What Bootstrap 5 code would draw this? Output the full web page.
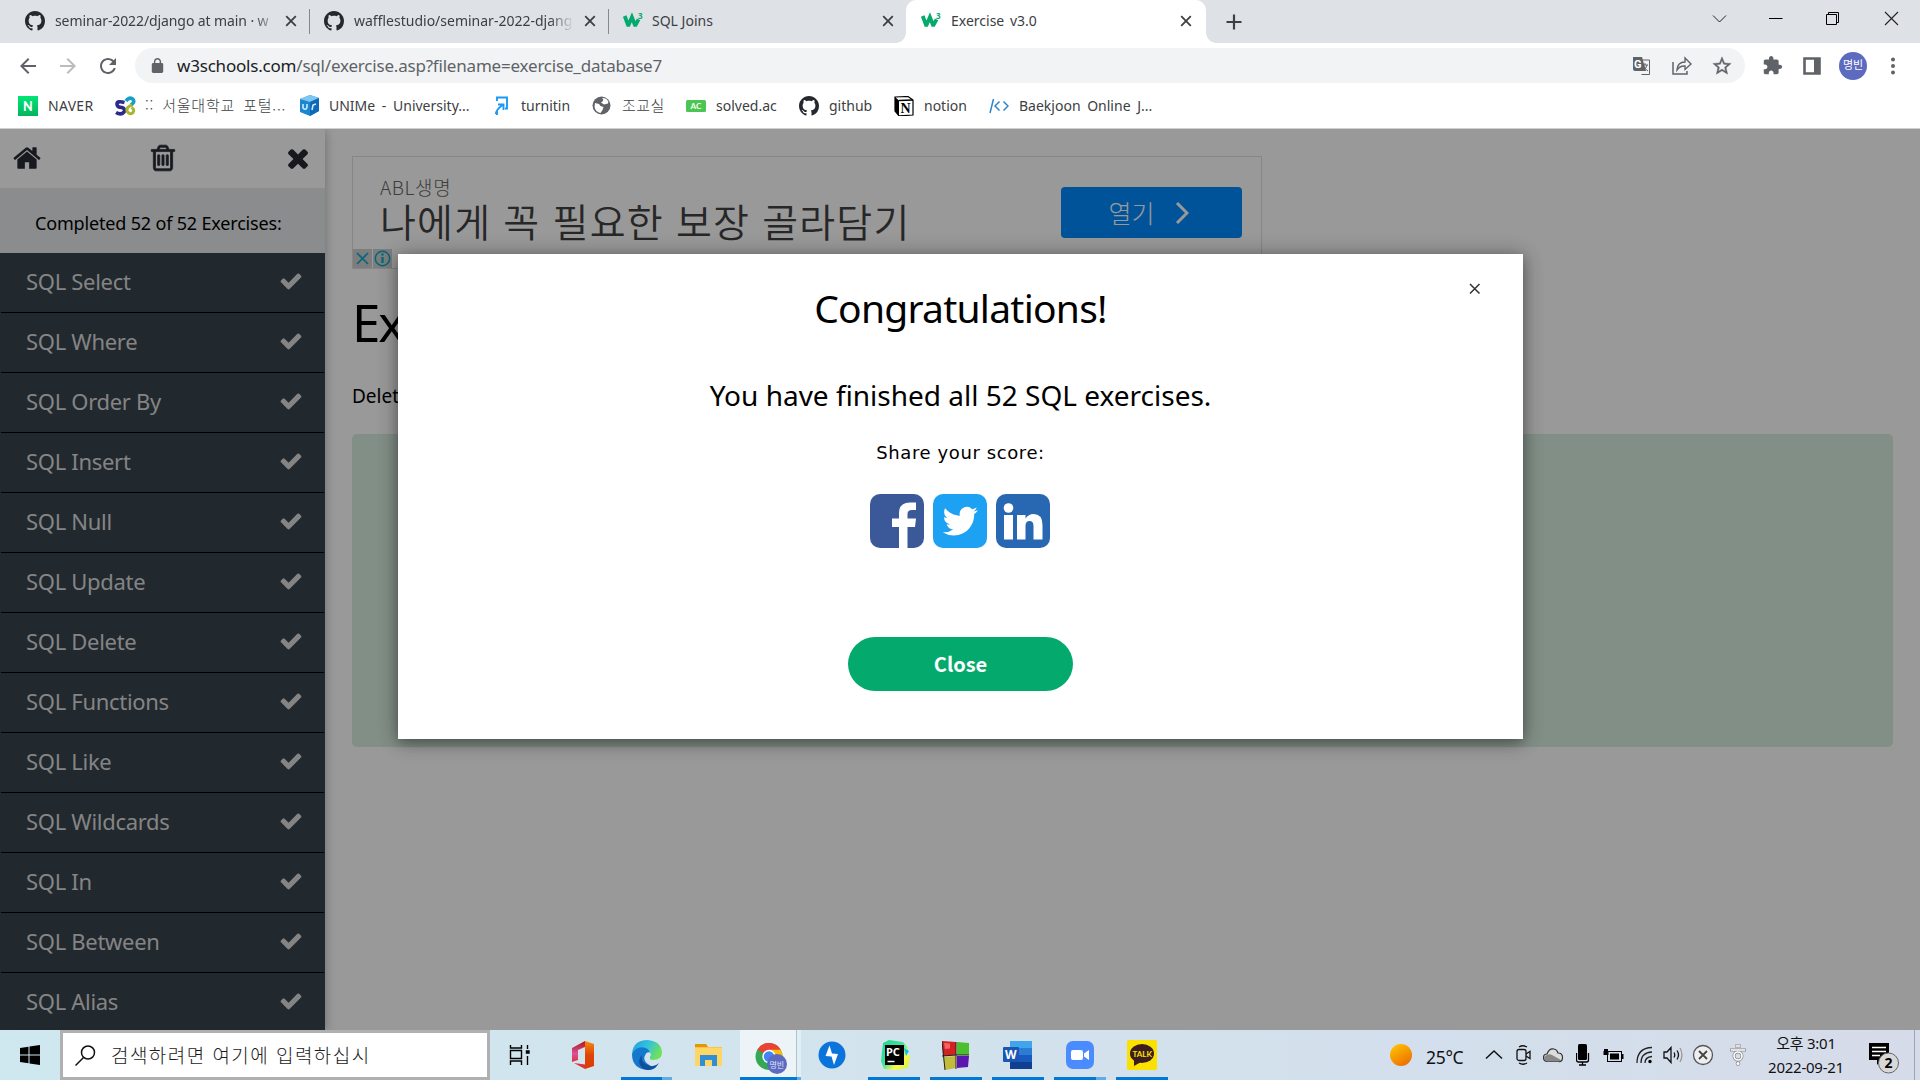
<!DOCTYPE html>
<html lang="ko">
<head>
<meta charset="utf-8">
<title>Exercise v3.0</title>
<link href="https://cdn.jsdelivr.net/npm/bootstrap@5.3.0/dist/css/bootstrap.min.css" rel="stylesheet">
<style>
:root{--ui:"Noto Sans","Noto Sans CJK KR",sans-serif}
body{width:1920px;height:1080px;overflow:hidden;font-family:var(--ui);color:#000;background:#fff}
svg{display:block;flex:none}
.nw{white-space:nowrap}
/* browser chrome */
.tabstrip{height:43px;background:#dee1e6;color:#3c4043;font-size:14px}
.tab{height:43px;padding-bottom:2px}
.tab .ttl{overflow:hidden;white-space:nowrap;line-height:22px}
.tab.sep{border-right:1px solid #85888d;height:25px;margin-top:9px;padding-bottom:1px;margin-bottom:9px}
.fade-end{-webkit-mask-image:linear-gradient(90deg,#000 88%,transparent 99%)}
.tab-on{width:300px;background:#fff;border-radius:10px 10px 0 0;position:relative}
.tab-on::before,.tab-on::after{content:"";position:absolute;bottom:0;width:10px;height:10px}
.tab-on::before{left:-10px;background:radial-gradient(circle at 0 0,transparent 9.5px,#fff 10px)}
.tab-on::after{right:-10px;background:radial-gradient(circle at 100% 0,transparent 9.5px,#fff 10px)}
.toolbar{height:45px}
.omni{height:35px;width:1610px;background:#f1f3f4;border-radius:18px;margin-left:15px}
.url{font-size:17px;letter-spacing:-.2px;color:#5f6368;margin-left:12px;line-height:24px}
.url b{font-weight:400;color:#202124}
.avatar{width:28px;height:28px;background:#5c6bc0;color:#fff;font-size:11px;margin-left:17px}
.bm{height:41px;padding-left:18px;font-size:14px;color:#3c4043;border-bottom:1px solid #d0d0d0;padding-bottom:5px;word-spacing:3px}
.bm>div{display:flex;align-items:center;white-space:nowrap}
.bm .ic{width:30px;flex:none}
.bm .ko{font-family:"Noto Sans CJK KR",sans-serif;font-weight:300;font-size:15px;letter-spacing:.8px}
/* page */
.page{height:901px;position:relative;overflow:hidden}
.side{width:325px;box-shadow:0 2px 10px rgba(0,0,0,.3);position:relative;z-index:1}
.side-head{height:59px;padding:14px 12px 0;color:#282a35}
.side-prog{height:65px;background:#e7e9eb;font-size:18px;line-height:71px;padding-left:35px;letter-spacing:-.17px}
.ex{height:60px;background:#38434d;color:#ddd;font-size:22px;padding:0 22px 4px 26px;letter-spacing:-.3px;position:relative}
.ex+.ex::before{content:"";position:absolute;left:1px;right:1px;top:-1px;height:1px;background:#000}
.main{padding:27px 27px 0 27px}
.adbox{width:910px;height:113px;border:1px solid #e0e0e0;position:relative}
.ad-brand{font:300 19px/24px "Noto Sans CJK KR",sans-serif;letter-spacing:.6px;color:#666}
.ad-line{font:350 39px/42px "Noto Sans CJK KR",sans-serif;letter-spacing:1.2px;color:#424242}
.ad-btn{width:181px;height:51px;border-radius:4px;background:#008aff;color:#fff;font-size:25px;font-family:"Noto Sans CJK KR",sans-serif;font-weight:300}
.ad-mark{position:absolute;left:0;bottom:0}
.h-ex{font-size:51px;line-height:60px;font-weight:400;letter-spacing:-2px}
.answer{height:313px;background:#d9eee1;border-radius:5px}
.shade{position:absolute;inset:0;background:rgba(0,0,0,.4);z-index:2}
.dlg{position:absolute;left:398px;top:125px;width:1125px;height:485px;background:#fff;z-index:3;box-shadow:0 4px 10px rgba(0,0,0,.2),0 4px 20px rgba(0,0,0,.19),0 0 20px rgba(0,0,0,.2)}
.dlg-x{position:absolute;right:42px;top:29px}
.dlg h2{font-size:39px;line-height:56px;font-weight:400;letter-spacing:-.75px}
.dlg h3{font-size:28px;line-height:40px;font-weight:400}
.share{font-family:"DejaVu Sans",sans-serif;font-size:18px;line-height:24px;letter-spacing:.6px}
.btn-done{width:225px;height:54px;background:#04aa6d;color:#fff;font:700 20px/50px "Noto Sans CJK KR",sans-serif;padding:0;border:0}
/* taskbar */
.task{height:50px;background:linear-gradient(90deg,#cfe7ef 0,#d2e4ee 40%,#d3dfec 75%,#d6dbe9 100%)}
.start{width:60px;padding-left:20px}
.find{width:430px;height:50px;border:3px solid #b0b0b0;background:#fff;font-size:19px;letter-spacing:1.45px;padding-left:12px;color:#1a1a1a;font-family:"Noto Sans CJK KR",sans-serif;font-weight:300}
.app{height:50px;width:62px;display:flex;align-items:center;justify-content:center;position:relative;flex:none}
.app.run::after{content:"";position:absolute;left:5px;right:5px;bottom:0;height:3px;background:#0078d7}
.app.multi::after{background:linear-gradient(90deg,#0078d7 81%,#64abe3 81%)}
.app.cur{background:linear-gradient(90deg,#edf4f8 56px,#a9c5d2 56px 57px,#e3eef4 57px)}
.app.cur::after{left:0;right:0;background:linear-gradient(90deg,#0078d7 57px,#64abe3 57px)}
.tray{color:#111}
.tray .tm{font-size:15px;line-height:24px;width:84px;text-align:center;letter-spacing:-.25px}
</style>
</head>
<body>
<svg width="0" height="0" style="position:absolute">
<defs>
<symbol id="gh" viewBox="0 0 16 16"><path fill="#24292f" d="M8 0C3.58 0 0 3.58 0 8c0 3.54 2.29 6.53 5.47 7.59.4.07.55-.17.55-.38 0-.19-.01-.82-.01-1.49-2.01.37-2.53-.49-2.69-.94-.09-.23-.48-.94-.82-1.13-.28-.15-.68-.52-.01-.53.63-.01 1.08.58 1.23.82.72 1.21 1.87.87 2.33.66.07-.52.28-.87.51-1.07-1.78-.2-3.64-.89-3.64-3.95 0-.87.31-1.59.82-2.15-.08-.2-.36-1.02.08-2.12 0 0 .67-.21 2.2.82.64-.18 1.32-.27 2-.27.68 0 1.36.09 2 .27 1.53-1.04 2.2-.82 2.2-.82.44 1.1.16 1.92.08 2.12.51.56.82 1.27.82 2.15 0 3.07-1.87 3.75-3.65 3.95.29.25.54.73.54 1.48 0 1.07-.01 1.93-.01 2.2 0 .21.15.46.55.38A8.013 8.013 0 0016 8c0-4.42-3.58-8-8-8z"/></symbol>
<symbol id="cx" viewBox="0 0 12 12"><path d="M1.2 1.2l9.600 9.600M10.800 1.200L1.200 10.800" stroke="#3c4043" stroke-width="1.800" fill="none"/></symbol>
<symbol id="w3" viewBox="0 0 20 20"><path d="M1.700 5l3.300 8.800h.6l3.300-7.600 3 7.600h.7l3-5.500" fill="none" stroke="#04aa6d" stroke-width="3.800"/><text x="15" y="8" font-size="8" font-weight="700" fill="#04aa6d" font-family="Noto Sans">3</text></symbol>
<symbol id="ck" viewBox="0 0 1792 1792"><path fill="currentColor" d="M1671 566q0 40-28 68l-724 724-136 136q-28 28-68 28t-68-28l-136-136-362-362q-28-28-28-68t28-68l136-136q28-28 68-28t68 28l294 295 656-657q28-28 68-28t68 28l136 136q28 28 28 68z"/></symbol>
<linearGradient id="gEdge" x1="0" y1="0" x2="1" y2=".4"><stop offset="0" stop-color="#1e9de0"/><stop offset=".55" stop-color="#33c3dd"/><stop offset="1" stop-color="#6fe05c"/></linearGradient>
<linearGradient id="gOff" x1="0" y1="0" x2="0" y2="1"><stop offset="0" stop-color="#b5121b"/><stop offset=".6" stop-color="#d9539a"/><stop offset="1" stop-color="#e0303a"/></linearGradient>
<linearGradient id="gOff2" x1="0" y1="0" x2="0" y2="1"><stop offset="0" stop-color="#f58a0c"/><stop offset=".5" stop-color="#e04406"/><stop offset="1" stop-color="#d93a05"/></linearGradient>
<linearGradient id="gSun" x1=".2" y1="0" x2=".8" y2="1"><stop offset="0" stop-color="#ffc400"/><stop offset="1" stop-color="#ec6a00"/></linearGradient>
<linearGradient id="gN" x1="0" y1="0" x2="0" y2="1"><stop offset="0" stop-color="#00e676"/><stop offset="1" stop-color="#04b45f"/></linearGradient>
<linearGradient id="gPc" x1="0" y1="0" x2="1" y2="1"><stop offset="0" stop-color="#21d789"/><stop offset=".45" stop-color="#3fe3a0"/><stop offset=".7" stop-color="#fcf84a"/><stop offset="1" stop-color="#c8f04a"/></linearGradient>
</defs></svg>

<header>
<div class="tabstrip d-flex">
  <div class="tab sep d-flex align-items-center" style="width:310px"><svg style="margin-left:25px" width="20" height="20"><use href="#gh"/></svg><div class="ttl fade-end" style="width:226px;margin-left:10px;letter-spacing:-.1px">seminar-2022/django at main · w</div><svg class="ms-1" width="12" height="12"><use href="#cx"/></svg></div>
  <div class="tab sep d-flex align-items-center" style="width:299px"><svg style="margin-left:14px" width="20" height="20"><use href="#gh"/></svg><div class="ttl fade-end" style="width:222px;margin-left:10px">wafflestudio/seminar-2022-django</div><svg style="margin-left:8px" width="12" height="12"><use href="#cx"/></svg></div>
  <div class="tab d-flex align-items-center" style="width:297px"><svg style="margin-left:13px" width="22" height="20"><use href="#w3"/></svg><div class="ttl ms-2" style="width:221px">SQL Joins</div><svg style="margin-left:9px" width="12" height="12"><use href="#cx"/></svg></div>
  <div class="tab tab-on d-flex align-items-center"><svg style="margin-left:14px" width="22" height="20"><use href="#w3"/></svg><div class="ttl" style="width:221px;margin-left:9px;word-spacing:2px">Exercise v3.0</div><svg style="margin-left:8px" width="12" height="12"><use href="#cx"/></svg></div>
  <svg style="margin:14px 0 0 20px" width="16" height="16"><path d="M8 .5v15M.5 8h15" stroke="#3c4043" stroke-width="2.200"/></svg>
  <div class="ms-auto d-flex" style="padding:11px 21px 0 0">
    <svg width="15" height="15"><path d="M1 4.500l6.500 6.500L14 4.500" fill="none" stroke="#222"/></svg>
    <svg style="margin-left:42px" width="14" height="15"><path d="M0 7.500h13.500" stroke="#000"/></svg>
    <svg style="margin-left:43px" width="14" height="15"><path d="M.5 3.500h10v10h-10zM2.500 3V1.500h10v10H11" fill="none" stroke="#000"/></svg>
    <svg style="margin-left:44px" width="15" height="15"><path d="M1 1l13 13M14 1L1 14" stroke="#222" stroke-width="1.100"/></svg>
  </div>
</div>
<div class="toolbar d-flex align-items-center">
  <svg style="margin-left:16px" width="24" height="24" viewBox="0 0 24 24"><path fill="#5f6368" d="M20 11H7.830l5.590-5.590L12 4l-8 8 8 8 1.410-1.410L7.830 13H20v-2z"/></svg>
  <svg style="margin-left:16px" width="24" height="24" viewBox="0 0 24 24"><path fill="#babcbe" d="M4 11h12.170l-5.590-5.590L12 4l8 8-8 8-1.410-1.410L16.170 13H4z"/></svg>
  <svg style="margin-left:16px" width="24" height="24" viewBox="0 0 24 24"><path fill="#5f6368" d="M17.650 6.350C16.200 4.900 14.210 4 12 4c-4.420 0-7.990 3.580-7.990 8s3.570 8 7.990 8c3.730 0 6.840-2.550 7.730-6h-2.080c-.82 2.330-3.040 4-5.650 4-3.310 0-6-2.690-6-6s2.690-6 6-6c1.660 0 3.140.69 4.220 1.780L13 11h7V4l-2.350 2.350z"/></svg>
  <div class="omni d-flex align-items-center">
    <svg style="margin-left:15px" width="15" height="15" viewBox="3 1 18 21"><path fill="#5f6368" d="M18 8h-1V6c0-2.760-2.240-5-5-5S7 3.240 7 6v2H6c-1.100 0-2 .9-2 2v10c0 1.100.9 2 2 2h12c1.100 0 2-.9 2-2V10c0-1.100-.9-2-2-2zM9 6c0-1.660 1.340-3 3-3s3 1.340 3 3v2H9V6z"/></svg>
    <div class="url nw"><b>w3schools.com</b>/sql/exercise.asp?filename=exercise_database7</div>
    <div class="ms-auto d-flex align-items-center" style="padding-right:12px">
      <svg width="20" height="20"><path d="M8 4h9.500v14.500H9.500" fill="#f1f3f4" stroke="#5f6368"/><path d="M1 1h9l4 14H3a2 2 0 0 1-2-2z" fill="#5f6368"/><text x="2" y="12" font-size="11" font-weight="700" fill="#fff" font-family="Roboto">G</text><path d="M10 9h6M13 7v2M15 9q-1 4-4 6M12 10.500q1.500 3 4 4.500" stroke="#5f6368" fill="none"/></svg>
      <svg style="margin-left:19px" width="22" height="20"><path d="M2 6v12h14v-3" fill="none" stroke="#5f6368" stroke-width="1.500"/><path d="M6 14q.5-8 8-8V2l6 6-6 5.500V10q-5-.5-8 4z" fill="none" stroke="#5f6368" stroke-width="1.400"/></svg>
      <svg style="margin-left:18px" width="22" height="22" viewBox="0 0 24 24"><path fill="#5f6368" stroke="#5f6368" stroke-width=".4" d="M22 9.240l-7.190-.62L12 2 9.190 8.630 2 9.240l5.460 4.730L5.820 21 12 17.270 18.180 21l-1.630-7.030L22 9.240zM12 15.400l-3.760 2.270 1-4.280-3.320-2.880 4.380-.38L12 6.100l1.710 4.040 4.380.38-3.320 2.880 1 4.280L12 15.400z"/></svg>
    </div>
  </div>
  <svg style="margin-left:17px" width="21" height="21" viewBox="0 0 24 24"><path fill="#5f6368" d="M20.500 11H19V7c0-1.100-.9-2-2-2h-4V3.500C13 2.120 11.880 1 10.500 1S8 2.120 8 3.500V5H4c-1.100 0-1.990.9-1.990 2v3.800H3.500c1.490 0 2.700 1.210 2.700 2.700s-1.210 2.700-2.700 2.700H2V20c0 1.100.9 2 2 2h3.800v-1.500c0-1.490 1.210-2.700 2.700-2.700s2.700 1.210 2.700 2.700V22H17c1.100 0 2-.9 2-2v-4h1.500c1.380 0 2.500-1.120 2.500-2.500S21.880 11 20.500 11z"/></svg>
  <svg style="margin-left:20px" width="19" height="18"><path d="M1.500 1.500h15v15h-15z" fill="#fff" stroke="#5f6368" stroke-width="2.600"/><path d="M11 1h6v16h-6z" fill="#5f6368"/></svg>
  <div class="avatar rounded-circle d-flex align-items-center justify-content-center nw">명빈</div>
  <svg style="margin-left:23px" width="6" height="18" fill="#5f6368"><circle cx="3" cy="2.500" r="2"/><circle cx="3" cy="9" r="2"/><circle cx="3" cy="15.500" r="2"/></svg>
</div>
<div class="bm d-flex">
  <div style="width:97px"><span class="ic"><svg width="20" height="20"><path fill="url(#gN)" d="M0 0h20v20H0z"/><text x="5" y="14.500" font-size="12.500" font-weight="900" fill="#fff" font-family="Lato">N</text></svg></span><span style="letter-spacing:.3px">NAVER</span></div>
  <div style="width:184px"><span class="ic"><svg width="22" height="20" fill="none" stroke-width="3.600"><path d="M9.500 6.500Q2 4.500 2 8t5 3.500q4 1.500 2 4.500-3 3.500-8 .5" stroke="#2d2a8c"/><path d="M11 5q3-4 6-2.500 4 3-1 6.500" stroke="#14a0c0"/><path d="M17 9q-6 2-5 6 2.500 4.500 6 1.500 2-3-1.500-5" stroke="#a9b52c" stroke-width="3"/></svg></span><span class="ko">:: 서울대학교 포털...</span></div>
  <div style="width:195px"><span class="ic"><svg width="21" height="21"><path d="M1 4l10-4 9 3v13l-9 5-10-4z" fill="#1b87cf"/><path d="M1 4l10-4 9 3-9 4z" fill="#7cc8f2"/><path d="M11 7v14l9-5V3z" fill="#1268b8"/><path d="M4 9v4q3 3 4-1v-3M13 15l1-5 3-1" stroke="#c9ecff" stroke-width="1.600" fill="none"/></svg></span>UNIMe - University...</div>
  <div style="width:98px"><span class="ic" style="width:27px"><svg width="15" height="20"><path d="M3 5V1.500h10v11h-2M2 18q-1-3 7-9.500M4 8.500h5.500V14M3 15v4" fill="none" stroke="#1a9af5" stroke-width="1.900"/></svg></span>turnitin</div>
  <div style="width:94px"><span class="ic"><svg width="19" height="19"><circle cx="9.500" cy="9.500" r="9" fill="#5f6368"/><path d="M3 7l4 1 1.500 2 3 1-1 3-2 3q-5-1-6-6zM10 2q2 1 1 3l-2 1.500 3 2 4-1q.8-2-1-4-2-2-5-1.500z" fill="#fff"/></svg></span><span class="ko" style="letter-spacing:.4px">조교실</span></div>
  <div style="width:113px"><span class="ic"><svg width="20" height="12"><rect width="20" height="12" rx="1.500" fill="#4cc552"/><text x="4.500" y="9" font-size="8" font-weight="700" fill="#fff" font-family="Lato">AC</text></svg></span>solved.ac</div>
  <div style="width:95px"><span class="ic"><svg width="20" height="20"><use href="#gh"/></svg></span>github</div>
  <div style="width:95px"><span class="ic"><svg width="20" height="20"><path d="M1 1l13-.5L19 4v15l-14 .8L1 15z" fill="#fff" stroke="#000" stroke-width="1.200"/><path d="M1 1l4 3.500V20L1 15z" fill="#000"/><path d="M5 4.500L19 4" stroke="#000" stroke-width="1.500"/><text x="6.500" y="16.500" font-size="14" font-weight="700" font-family="Liberation Serif">N</text></svg></span>notion</div>
  <div><span class="ic"><svg width="20" height="16" fill="none" stroke="#2f86c9" stroke-width="1.500"><path d="M4.500 1L1 15M10.500 3.500L6 8l4.500 4.500M14.500 3.500L19 8l-4.500 4.500"/></svg></span><span>Baekjoon Online J...</span></div>
</div>
</header>

<div class="page d-flex">
  <nav class="side flex-shrink-0 bg-white">
    <div class="side-head d-flex justify-content-between">
      <svg width="30" height="30" viewBox="0 0 1792 1792"><path fill="currentColor" d="M1472 992v480q0 26-19 45t-45 19h-384v-384h-256v384h-384q-26 0-45-19t-19-45v-480q0-1 .5-3t.5-3l575-474 575 474q1 2 1 6zm223-69l-62 74q-8 9-21 11h-3q-13 0-21-7l-692-577-692 577q-12 8-24 7-13-2-21-11l-62-74q-8-10-7-23.500t11-21.500l719-599q32-26 76-26t76 26l244 204v-195q0-14 9-23t23-9h192q14 0 23 9t9 23v408l219 182q10 8 11 21.500t-7 23.500z"/></svg>
      <svg width="30" height="30" viewBox="0 0 1792 1792"><path fill="currentColor" stroke="currentColor" stroke-width="44" d="M704 736v576q0 14-9 23t-23 9h-64q-14 0-23-9t-9-23v-576q0-14 9-23t23-9h64q14 0 23 9t9 23zm256 0v576q0 14-9 23t-23 9h-64q-14 0-23-9t-9-23v-576q0-14 9-23t23-9h64q14 0 23 9t9 23zm256 0v576q0 14-9 23t-23 9h-64q-14 0-23-9t-9-23v-576q0-14 9-23t23-9h64q14 0 23 9t9 23zm128 724v-948h-896v948q0 22 7 40.500t14.500 27 10.500 8.500h832q3 0 10.500-8.500t14.500-27 7-40.500zm-672-1076h448l-48-117q-7-9-17-11h-317q-10 2-17 11zm928 32v64q0 14-9 23t-23 9h-96v948q0 83-47 143.500t-113 60.500h-832q-66 0-113-58.500t-47-141.500v-952h-96q-14 0-23-9t-9-23v-64q0-14 9-23t23-9h309l70-167q15-37 54-63t79-26h320q40 0 79 26t54 63l70 167h309q14 0 23 9t9 23z"/></svg>
      <svg width="30" height="30" viewBox="0 0 1792 1792"><path fill="currentColor" d="M1490 1322q0 40-28 68l-136 136q-28 28-68 28t-68-28l-294-294-294 294q-28 28-68 28t-68-28l-136-136q-28-28-28-68t28-68l294-294-294-294q-28-28-28-68t28-68l136-136q28-28 68-28t68 28l294 294 294-294q28-28 68-28t68 28l136 136q28 28 28 68t-28 68l-294 294 294 294q28 28 28 68z"/></svg>
    </div>
    <div class="side-prog nw">Completed 52 of 52 Exercises:</div>
    <div class="ex d-flex align-items-center justify-content-between">SQL Select<svg width="24" height="24"><use href="#ck"/></svg></div>
    <div class="ex d-flex align-items-center justify-content-between">SQL Where<svg width="24" height="24"><use href="#ck"/></svg></div>
    <div class="ex d-flex align-items-center justify-content-between">SQL Order By<svg width="24" height="24"><use href="#ck"/></svg></div>
    <div class="ex d-flex align-items-center justify-content-between">SQL Insert<svg width="24" height="24"><use href="#ck"/></svg></div>
    <div class="ex d-flex align-items-center justify-content-between">SQL Null<svg width="24" height="24"><use href="#ck"/></svg></div>
    <div class="ex d-flex align-items-center justify-content-between">SQL Update<svg width="24" height="24"><use href="#ck"/></svg></div>
    <div class="ex d-flex align-items-center justify-content-between">SQL Delete<svg width="24" height="24"><use href="#ck"/></svg></div>
    <div class="ex d-flex align-items-center justify-content-between">SQL Functions<svg width="24" height="24"><use href="#ck"/></svg></div>
    <div class="ex d-flex align-items-center justify-content-between">SQL Like<svg width="24" height="24"><use href="#ck"/></svg></div>
    <div class="ex d-flex align-items-center justify-content-between">SQL Wildcards<svg width="24" height="24"><use href="#ck"/></svg></div>
    <div class="ex d-flex align-items-center justify-content-between">SQL In<svg width="24" height="24"><use href="#ck"/></svg></div>
    <div class="ex d-flex align-items-center justify-content-between">SQL Between<svg width="24" height="24"><use href="#ck"/></svg></div>
    <div class="ex d-flex align-items-center justify-content-between">SQL Alias<svg width="24" height="24"><use href="#ck"/></svg></div>
  </nav>
  <main class="main flex-grow-1">
    <div class="adbox d-flex justify-content-between">
      <div class="nw" style="padding:18px 0 0 27px"><div class="ad-brand">ABL생명</div><div class="ad-line">나에게 꼭 필요한 보장 골라담기</div></div>
      <div class="ad-btn d-flex align-items-center justify-content-center" style="margin:30px 19px 0 0;padding-right:6px"><span>열기</span><svg style="margin-left:20px" width="14" height="22"><path d="M2 1l10 10L2 21" fill="none" stroke="#fff" stroke-width="3"/></svg></div>
      <div class="ad-mark d-flex" style="gap:1px">
        <svg width="19" height="19"><path fill="#d0d0d0" d="M0 0h19v19H0z"/><path d="M4 4l11 11M15 4L4 15" stroke="#00aecd" stroke-width="1.700"/></svg>
        <svg width="19" height="19"><path fill="#d0d0d0" d="M0 0h19v19H0z"/><circle cx="9.500" cy="9.500" r="7.200" fill="none" stroke="#00aecd" stroke-width="1.500"/><path d="M9.500 8v6M9.500 4.500v2" stroke="#00aecd" stroke-width="2.200"/></svg>
      </div>
    </div>
    <h1 class="h-ex mb-0 nw" style="margin-top:23px">Exercise:</h1>
    <p class="mb-0 nw" style="font-size:19px;line-height:28px;margin-top:30px">Delete</p>
    <div class="answer" style="margin-top:24px"></div>
  </main>
  <div class="shade"></div>
  <section class="dlg d-flex flex-column align-items-center">
    <svg class="dlg-x" width="12" height="12"><path d="M1 1l9.500 9.500M10.500 1L1 10.500" stroke="#333" stroke-width="1.500"/></svg>
    <h2 class="mb-0 nw" style="margin-top:26px">Congratulations!</h2>
    <h3 class="mb-0 nw" style="margin-top:39px">You have finished all 52 SQL exercises.</h3>
    <div class="share nw" style="margin-top:26px">Share your score:</div>
    <div class="d-flex" style="margin:29px 1px 0 0;gap:9px">
      <svg width="54" height="54"><rect width="54" height="54" rx="10" fill="#3b5998"/><path d="M29 54V33h-7v-8.500h7V19q0-10.500 11-10.500h6V16h-4q-4.500 0-4.500 4v4.500H46l-1 8.500h-7.500v21z" fill="#fff"/></svg>
      <svg width="54" height="54"><rect width="54" height="54" rx="10" fill="#1da1f2"/><path transform="translate(9.700 9.700) scale(1.460)" fill="#fff" d="M23.953 4.570a10 10 0 01-2.825.775 4.958 4.958 0 002.163-2.723c-.951.555-2.005.959-3.127 1.184a4.920 4.920 0 00-8.384 4.482C7.690 8.095 4.067 6.130 1.640 3.162a4.822 4.822 0 00-.666 2.475c0 1.710.870 3.213 2.188 4.096a4.904 4.904 0 01-2.228-.616v.060a4.923 4.923 0 003.946 4.827 4.996 4.996 0 01-2.212.085 4.936 4.936 0 004.604 3.417 9.867 9.867 0 01-6.102 2.105c-.39 0-.779-.023-1.170-.067a13.995 13.995 0 007.557 2.209c9.053 0 13.998-7.496 13.998-13.985 0-.21 0-.42-.015-.63A9.935 9.935 0 0024 4.590z"/></svg>
      <svg width="54" height="54"><rect width="54" height="54" rx="10" fill="#2867b2"/><circle cx="12.500" cy="14" r="4.800" fill="#fff"/><path d="M8 21h9v24.500H8zM21 21h8.500v3.500q3-4.500 8-4.500 9 0 9 11v14.500h-9V32q0-5-4-5t-4 5v13.500H21z" fill="#fff"/></svg>
    </div>
    <button class="btn-done btn rounded-pill" style="margin-top:89px">Close</button>
  </section>
</div>

<footer class="task d-flex align-items-center">
  <div class="start"><svg width="20" height="20"><path d="M0 3l8.500-1.200v7.700H0zM9.500 1.600L20 0v9.500H9.500zM0 10.500h8.500v7.700L0 17zM9.500 10.500H20V20L9.500 18.400z"/></svg></div>
  <div class="find d-flex align-items-center nw"><svg width="21" height="21"><circle cx="13" cy="7.500" r="6.500" fill="none" stroke="#111" stroke-width="1.500"/><path d="M8.500 12.500L.5 20.500" stroke="#111" stroke-width="1.500"/></svg><span style="margin-left:15px">검색하려면 여기에 입력하십시</span></div>
  <div class="app" style="width:59px"><svg width="22" height="20" fill="none" stroke="#000" stroke-width="1.400"><path d="M1.500 0v3h11V0M1.500 5.500h11v8h-11zM1.500 20v-4h11v4M18.500 0v4M18.500 11v9"/><path fill="#000" d="M17.500 6h2.500v2h-2.500z"/></svg></div>
  <div class="app" style="width:67px"><svg width="24" height="28"><path d="M1 7L14 0v6L7 9v10l-6 2z" fill="url(#gOff)"/><path d="M14 0l9 3v22l-9 3z" fill="url(#gOff2)"/><path d="M3 22l11 1.500V28z" fill="#e0303a"/></svg></div>
  <div class="app run multi" style="width:61px"><svg width="30" height="30" viewBox="0 0 30 30"><path d="M0 14Q1 0 15.500 0 29 1 30 12q0 8-9 8-4 0-3-3 2-3-1-6Q10 5 0 14z" fill="url(#gEdge)"/><path d="M0 14Q4 6 12 7.500q5 1 6 5-2-1-4 1-5 7 4 12 4 2 7 1-4 3.500-9 3.500Q0 29 0 14z" fill="#1478cf"/><path d="M10 15q-2 8 8 11 5 1 9-3-4 7-11 7-8-1-9-8 0-4 3-7z" fill="#0f4f9c"/></svg></div>
  <div class="app" style="width:63px"><svg width="28" height="24"><path d="M0 1h11l2 3h14v19H0z" fill="#fcc644"/><path d="M0 1h11l2 3H0z" fill="#dd9a06"/><path d="M0 5h27v18H0z" fill="#ffd566"/><path d="M5 23V12h17v11h-5v-6h-7v6z" fill="#2f8ed6"/></svg></div>
  <div class="app run cur" style="width:61px"><svg style="margin-top:7px;margin-left:3px" width="34" height="32"><circle cx="14" cy="13.500" r="13.500" fill="#34a853"/><path d="M14 13L2.300 6.700A13.500 13.500 0 0 1 25.700 6.700z" fill="#ea4335"/><path d="M14 6.700h11.700A13.500 13.500 0 0 1 14 27l6-10z" fill="#fbbc05"/><circle cx="14" cy="13.500" r="6.700" fill="#fff"/><circle cx="14" cy="13.500" r="5.200" fill="#4285f4"/><circle cx="22" cy="21" r="10" fill="#5c6bc0"/><text x="14.500" y="24.500" font-size="8" fill="#dfe3ff" font-family="Noto Sans CJK KR">명빈</text></svg></div>
  <div class="app" style="width:62px"><svg width="28" height="28"><circle cx="14" cy="14" r="13.500" fill="#0b74da"/><path d="M11.500 4.500l-4 10.500 6 .5 2.500 8.500 4-11-6-.5z" fill="#fff"/></svg></div>
  <div class="app run" style="padding-left:1px"><svg width="30" height="30"><path d="M3 3l6-3 14 2 5 6-1 6 3 2-2 12-12 2-12-1-3-8z" fill="url(#gPc)"/><path d="M24 8l5 3-3 5z" fill="#07c3f2"/><path fill="#000" d="M5 5h19v20H5z"/><text x="6" y="15.500" font-size="11" font-weight="700" fill="#fff" font-family="Noto Sans">PC</text><path d="M7.500 21.500h7" stroke="#fff" stroke-width="1.500"/></svg></div>
  <div class="app run"><svg width="28" height="29"><path d="M0 0l14 1v13L1 15z" fill="#d42222"/><path d="M15 1l12 1v12H15z" fill="#4cbf2e"/><path d="M1 16l13-1v12L3 29z" fill="#c2bb3c"/><path d="M15 15h12l-1 11-11 1z" fill="#5b16b0"/><path d="M2 2l6 .5v5L3 8z" fill="#ff8080" opacity=".7"/><path d="M0 0l3 29M0 15l14-1h13M14 1v27" stroke="#222" fill="none"/></svg></div>
  <div class="app run"><svg width="30" height="28"><path fill="#41a5ee" d="M7 0h22v7H7z"/><path fill="#2b7cd3" d="M7 7h22v7H7z"/><path fill="#185abd" d="M7 14h22v7H7z"/><path fill="#103f91" d="M7 21h22v7H7z"/><rect y="6" width="16" height="15" rx="1" fill="#1a56b4"/><text x="2" y="18" font-size="12" font-weight="700" fill="#fff" font-family="Noto Sans">W</text></svg></div>
  <div class="app run multi"><svg width="28" height="28"><rect width="28" height="28" rx="7" fill="#4a8cff"/><rect x="5" y="9" width="12" height="10" rx="2" fill="#fff"/><path d="M18 12.500l5-3.500v10l-5-3.500z" fill="#fff"/></svg></div>
  <div class="app run"><svg width="30" height="30"><rect width="30" height="30" rx="1.500" fill="#fae100"/><ellipse cx="15" cy="13.500" rx="12" ry="9.500" fill="#3c1e1e"/><path d="M7 20v6l7-4z" fill="#3c1e1e"/><text x="5.500" y="17" font-size="8" font-weight="700" fill="#fae100" font-family="Lato">TALK</text></svg></div>
  <div class="tray ms-auto d-flex align-items-center nw" style="width:530px">
    <svg width="22" height="22"><circle cx="11" cy="11" r="11" fill="url(#gSun)"/></svg>
    <span style="margin:5px 0 0 14px;width:59px;font-size:17.500px;letter-spacing:-.3px">25°C</span>
    <svg style="width:31px" height="12"><path d="M1 9.500L9 2l8 7.500" fill="none" stroke="#111" stroke-width="1.500"/></svg>
    <svg style="width:27px" height="20" fill="none" stroke="#111" stroke-width="1.300"><rect x="1" y="4.500" width="9" height="11" rx="2"/><path d="M10 9l4-2.500v7L10 11M3 2q4-2.500 8 0M3 18q4 2.500 8 0"/></svg>
    <svg style="width:33px" height="16"><path d="M4 14.500q-3.500-.5-3.500-4T4 7q2-6 7-5 3 .5 4 4 4.500 0 4.500 4.500t-4 4z" fill="#ddd" stroke="#333" stroke-width="1.200"/><path d="M1 10q4-4 8-2l9 5q-1 1.500-3 1.500H4q-3-1-3-4.500z" fill="#888"/></svg>
    <svg style="width:27px" height="22"><rect x="2" y="0" width="9" height="16" rx="1.500"/><path d="M.5 9v7q0 2 2 2h8q2 0 2-2V9M6.500 18v3M3 21h7" fill="none" stroke="#000" stroke-width="1.300"/></svg>
    <svg style="width:33px" height="15"><rect x="4.500" y="3.500" width="14" height="10" fill="none" stroke="#000"/><path d="M7 5.500h9v6H7zM19 6h1.500v5H19zM1 1v3q0 2 2 2t2-2V1M3 6v5"/><path d="M.5 3h5v4h-5z"/></svg>
    <svg style="width:27px" height="18" fill="none" stroke="#222" stroke-width="1.300"><path d="M1 17Q1 2 16 1.500M5 17Q5 6.500 16 6M9 17q0-6 7-6.500"/><circle cx="14" cy="15.500" r="1.700" fill="#000" stroke="none"/></svg>
    <svg style="width:29px" height="18" fill="none" stroke="#111" stroke-width="1.300"><path d="M1 6h3l4-4.500v15L4 12H1zM11 6.500q1.500 2.500 0 5M14 4.500q3 4.500 0 9"/><path d="M17 2q4 7 0 14" stroke="#999"/></svg>
    <svg style="width:37px" height="22"><circle cx="11" cy="11" r="9.500" fill="#eee" stroke="#555" stroke-width="1.300"/><path d="M7 7l8 8M15 7l-8 8" stroke="#444" stroke-width="1.800"/></svg>
    <svg style="width:35px" height="22" fill="none"><path d="M6 2h6M1 6h16" stroke="#888" stroke-width="2.800"/><circle cx="9" cy="12" r="4" stroke="#888" stroke-width="3"/><circle cx="9" cy="19.500" r="2.200" fill="#888"/><path d="M6.500 2h5M1.700 6h14.600" stroke="#fff" stroke-width="1.500"/><circle cx="9" cy="12" r="4" stroke="#fff" stroke-width="1.600"/><circle cx="9" cy="19.500" r="1.500" fill="#fff"/></svg>
    <div class="tm">오후 3:01<br>2022-09-21</div>
    <svg style="margin:6px 0 0 20px;width:46px" height="34"><path d="M1 2h20v17h-8l-4 5v-5H1z"/><path d="M4 6.500h14M4 10.500h14M4 14.500h8" stroke="#fff" stroke-width="1.400"/><circle cx="20.500" cy="22" r="10" fill="#d8d8d8" stroke="#666"/><text x="16.500" y="27" font-size="14" font-weight="700" font-family="Noto Sans">2</text></svg>
    <svg width="2" height="50"><path d="M.5 0v50" stroke="#9aa5b5"/></svg>
  </div>
</footer>
<script src="https://cdn.jsdelivr.net/npm/bootstrap@5.3.0/dist/js/bootstrap.bundle.min.js"></script>
</body>
</html>
